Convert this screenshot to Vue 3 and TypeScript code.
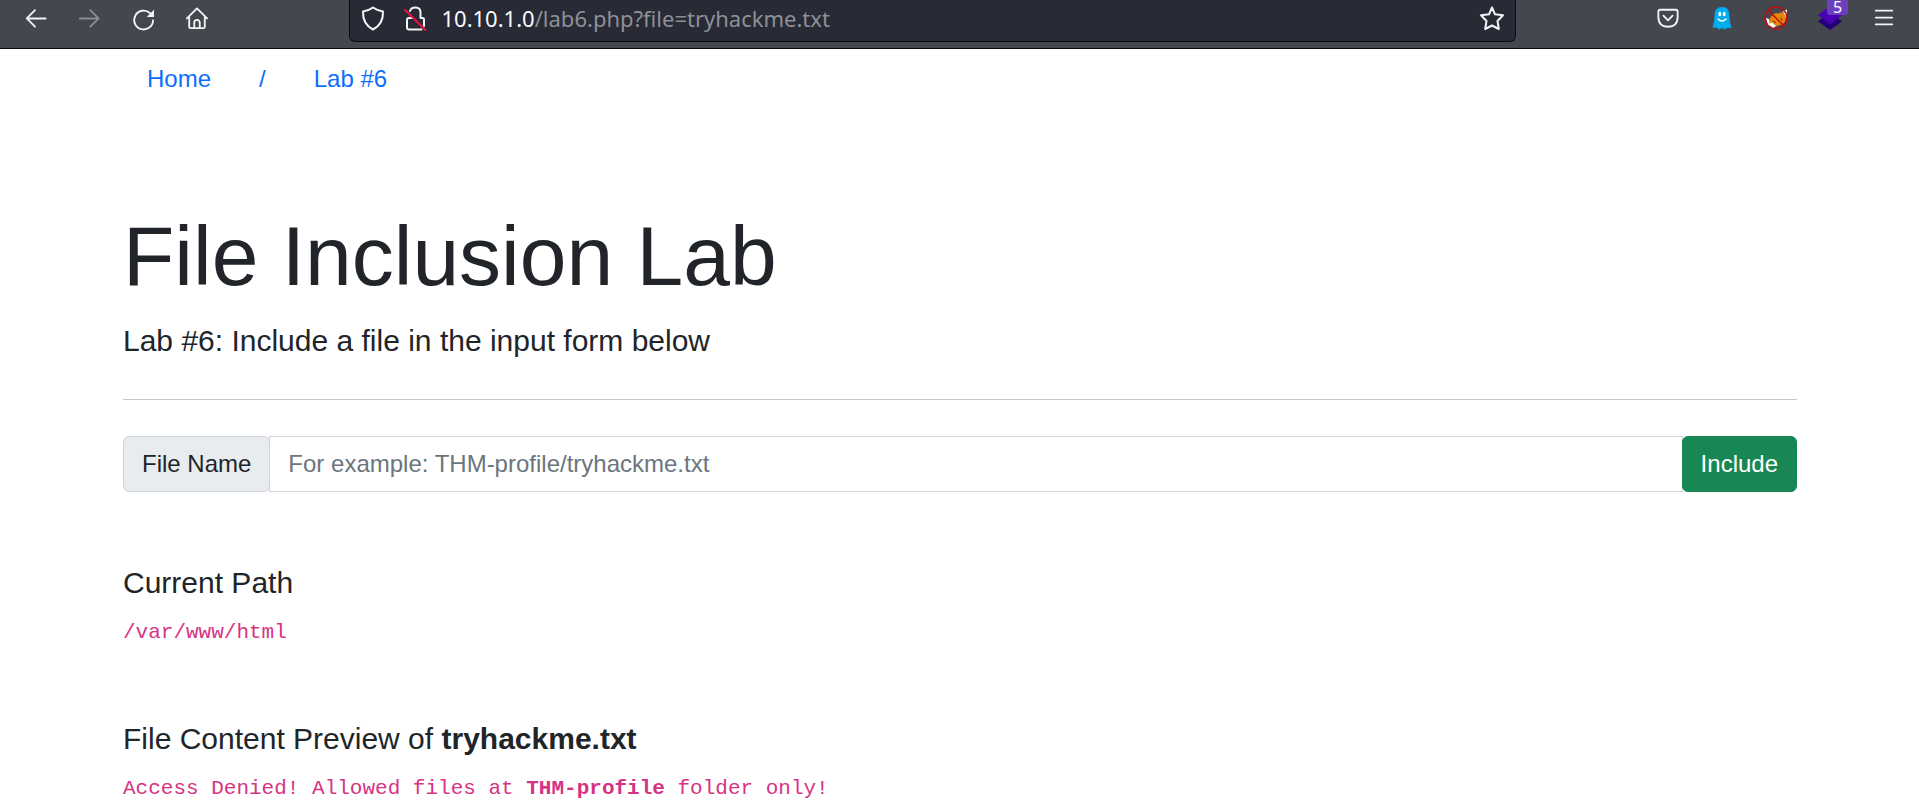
<script setup lang="ts">
import { ref } from 'vue'

const fileName = ref('')
const host = '10.10.1.0'
const path = '/lab6.php?file=tryhackme.txt'
</script>

<template>
  <header class="toolbar">
    <div class="tools">
      <button type="button" class="tool line" aria-label="Back">
        <svg viewBox="0 0 24 24"><path d="M23.500 12.500H3M12 3.500L3 12.500L12 21.500" /></svg>
      </button>
      <button type="button" class="tool line dim" aria-label="Forward">
        <svg viewBox="0 0 24 24"><path d="M2 12.500H22.500M13.500 3.500L22.500 12.500L13.500 21.500" /></svg>
      </button>
      <button type="button" class="tool line" aria-label="Reload">
        <svg viewBox="0 0 24 24">
          <path d="M23 14.500A10.300 10.300 0 1 1 19.500 6.500" />
          <path class="fill" d="M24 3V11H16Z" />
        </svg>
      </button>
      <button type="button" class="tool line" aria-label="Home">
        <svg viewBox="0 0 24 24">
          <path d="M1 12.500L12 1.500L23 12.500M3.500 11V21.500Q3.500 23 5 23H19Q20.500 23 20.500 21.500V11M9 22.500V17.500Q9 14 12 14Q15 14 15 17.500V22.500" />
        </svg>
      </button>
    </div>
    <div class="spacer"></div>
    <div class="urlbar">
      <button type="button" class="mini" aria-label="Tracking protection">
        <svg viewBox="0 0 24 24"><path d="M12 1.500Q16 4.500 22 5.500Q22.500 18 12 23.500Q1.500 18 2 5.500Q8 4.500 12 1.500Z" /></svg>
      </button>
      <button type="button" class="mini" aria-label="Connection is not secure">
        <svg viewBox="0 0 24 24">
          <path d="M7 5Q8 1.500 12.500 1.500Q17.500 1.500 17.500 6.500V12H19.500Q21 12 21 13.500V20M18.500 23.500H6Q4 23.500 4 21.500V14Q4 12 6 12H9" />
          <path class="strike" d="M2 4L22.500 24" />
        </svg>
      </button>
      <span class="address"><span class="host">{{ host }}</span>{{ path }}</span>
      <button type="button" class="mini" aria-label="Bookmark this page">
        <svg viewBox="0 0 24 24"><path d="M12 1.500L15 8.300L23 9.200L17.500 15L18.800 23L12 19.500L5.200 23L6.500 15L1 9.200L9 8.300Z" /></svg>
      </button>
    </div>
    <div class="spacer"></div>
    <div class="tools">
      <button type="button" class="tool line" aria-label="Pocket">
        <svg viewBox="0 0 24 24"><path d="M3.500 3H20.500Q22.500 3 22.500 5V11Q22.500 21.500 12 21.500Q1.500 21.500 1.500 11V5Q1.500 3 3.500 3ZM7 9.500L12 14.500L17 9.500" /></svg>
      </button>
      <button type="button" class="tool" aria-label="Ghostery">
        <svg viewBox="0 0 24 24">
          <path class="ghost" d="M12 1C17 1 19 4 19.300 8L19.800 15L21.500 22L17.500 21.500L15 23.500L12 22L9 23.500L6.500 21.500L2.500 22L4.200 15L4.700 8C5 4 7 1 12 1Z" />
          <ellipse class="eye" cx="9.800" cy="8" rx="1.500" ry="2.300" />
          <ellipse class="eye" cx="14.200" cy="8" rx="1.500" ry="2.300" />
          <path class="smile" d="M8 13Q12 17 16 13" />
        </svg>
      </button>
      <button type="button" class="tool" aria-label="Fox blocker">
        <svg viewBox="0 0 24 24">
          <path class="fox-white" d="M2 12L5 13L8 21L4 19Z" />
          <path class="fox-white" d="M19 5L23 3.500L22.500 12L21 12Z" />
          <path class="fox" d="M6 12Q10 6 14 7.500L19 6L22 11Q21 19 16 19L10 21L5 18Z" />
          <path class="fox-white" d="M5 18L8 16.500L12 20L9 22Z" />
          <path class="fox-mark" d="M9 15L11.500 16.500M17 12L18 14.500" />
          <circle class="ban" cx="12" cy="12" r="11" />
          <path class="ban" d="M4.200 4.200L19.800 19.800" />
        </svg>
      </button>
      <button type="button" class="tool" aria-label="Layers">
        <svg viewBox="0 0 24 24">
          <path class="layer-low" d="M0 15.500L12 6L24 15.500L12 24Z" />
          <path class="layer-top" d="M0 9L12 0L24 9L12 18.500Z" />
        </svg>
        <span class="badge">5</span>
      </button>
      <button type="button" class="tool line" aria-label="Menu">
        <svg viewBox="0 0 24 24"><path d="M3 4H21M3 11.500H21M3 19H21" /></svg>
      </button>
    </div>
  </header>

  <main class="container">
    <nav class="crumbs" aria-label="Breadcrumb">
      <a href="#">Home</a>
      <a href="#">/</a>
      <a href="#">Lab #6</a>
    </nav>
    <h1>File Inclusion Lab</h1>
    <p class="lead">Lab #6: Include a file in the input form below</p>
    <hr />
    <form class="group" @submit.prevent>
      <label for="file">File Name</label>
      <input id="file" v-model="fileName" type="text" placeholder="For example: THM-profile/tryhackme.txt" />
      <button type="submit">Include</button>
    </form>
    <section>
      <h2>Current Path</h2>
      <code>/var/www/html</code>
    </section>
    <section>
      <h2>File Content Preview of <b>tryhackme.txt</b></h2>
      <code>Access Denied! Allowed files at <b>THM-profile</b> folder only!</code>
    </section>
  </main>
</template>

<style>
body {
  margin: 0;
  background: #fff;
}
</style>

<style scoped>
* {
  box-sizing: border-box;
}

.toolbar {
  display: flex;
  align-items: flex-start;
  height: 49px;
  padding: 0 8px;
  background: #45474f;
  border-bottom: 1px solid #0c0c0e;
  font-family: "Noto Sans", sans-serif;
}

.tools {
  display: flex;
}

.spacer {
  flex: 126 1 0;
}

.tool,
.mini {
  position: relative;
  display: flex;
  align-items: center;
  justify-content: center;
  height: 36px;
  padding: 0;
  border: 0;
  background: none;
  color: #f4f4f6;
}

.tool {
  width: 54px;
}

.mini {
  width: 42px;
  flex: none;
}

.dim {
  color: #8b8c90;
}

svg {
  width: 24px;
  height: 24px;
  overflow: visible;
  fill: none;
  stroke: currentColor;
  stroke-width: 2;
  stroke-linecap: round;
  stroke-linejoin: round;
}

.line svg {
  width: 22px;
  height: 22px;
}

svg .fill {
  fill: currentColor;
  stroke: none;
}

svg .strike {
  stroke: #f0103f;
}

svg .ghost {
  fill: #00aef0;
  stroke: none;
}

svg .eye {
  fill: #fff;
  stroke: none;
}

svg .smile {
  stroke: #fff;
  stroke-width: 1.5;
}

svg .fox {
  fill: #e8850c;
  stroke: none;
}

svg .fox-white {
  fill: #fff;
  stroke: none;
}

svg .fox-mark {
  stroke: #5a3210;
  stroke-width: 1;
}

svg .ban {
  stroke: #c00b0b;
  stroke-width: 1.5;
}

svg .layer-low {
  fill: #210078;
  stroke: none;
}

svg .layer-top {
  fill: #4a00b4;
  stroke: none;
}

.badge {
  position: absolute;
  top: 0;
  left: 24px;
  width: 21px;
  height: 15px;
  border-radius: 0 0 3px 3px;
  background: #6b3fc0;
  color: #fff;
  font-family: "Noto Sans", sans-serif;
  font-size: 16px;
  line-height: 14px;
  text-align: center;
}

.urlbar {
  flex: 1165 1 0;
  display: flex;
  height: 42px;
  padding: 0 2px;
  background: #282a36;
  border: 1px solid #0c0c0e;
  border-top: 0;
  border-radius: 0 0 6px 6px;
}

.address {
  flex: 1;
  padding-left: 5px;
  color: #8f9096;
  font-size: 22px;
  line-height: 36px;
  white-space: nowrap;
}

.host {
  color: #fbfbfe;
}

.container {
  max-width: 1721px;
  margin: 0 auto;
  padding: 0 23px 0 24px;
  color: #212529;
  font-family: "Liberation Sans", Arial, sans-serif;
  font-size: 24px;
  line-height: 36px;
}

.crumbs {
  display: flex;
  padding: 12px 0;
}

.crumbs a {
  padding: 0 24px;
  color: #0d6efd;
  text-decoration: none;
}

h1 {
  margin: 97px 0 11px;
  font-size: 84px;
  font-weight: 400;
  line-height: 101px;
}

.lead {
  margin: 0;
  font-size: 30px;
  line-height: 45px;
}

hr {
  height: 1px;
  margin: 36px 0;
  border: 0;
  background: #c7c8c9;
}

.group {
  display: flex;
}

.group label,
.group input,
.group button {
  height: 56px;
  padding: 9px 18px;
  border: 1px solid #ced4da;
  font: inherit;
}

.group label {
  background: #e9ecef;
  border-radius: 6px;
}

.group input {
  flex: 1;
  min-width: 0;
  margin: 0 -1px;
  background: #fff;
  color: #212529;
  outline: 0;
}

.group input::placeholder {
  color: #6c757d;
  opacity: 1;
}

.group button {
  position: relative;
  background: #198754;
  border-color: #198754;
  border-radius: 6px;
  color: #fff;
}

section {
  margin-top: 73px;
}

h2 {
  margin: 0 0 16px;
  font-size: 30px;
  font-weight: 400;
  line-height: 36px;
}

code {
  display: block;
  color: #d63384;
  font-family: "Liberation Mono", monospace;
  font-size: 21px;
  line-height: 31px;
}
</style>
